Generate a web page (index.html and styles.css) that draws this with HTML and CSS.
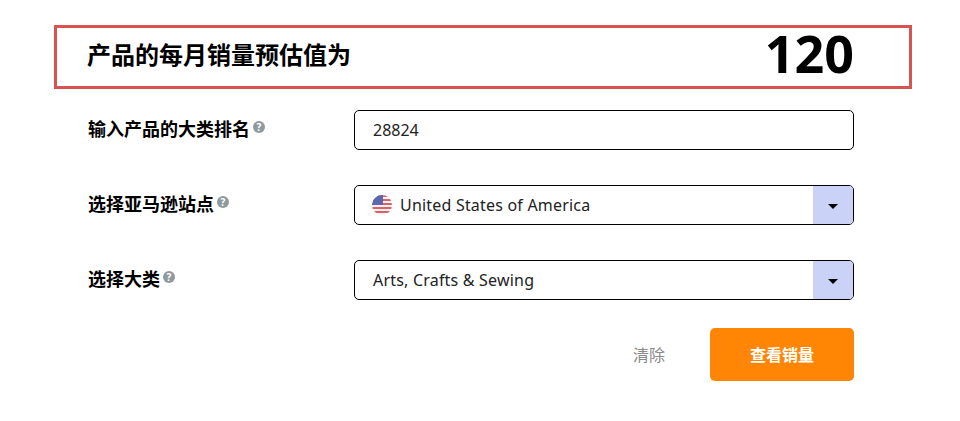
FILE: index.html
```html
<!DOCTYPE html>
<html lang="zh-CN">

<head>
    <meta charset="UTF-8">
    <meta name="viewport" content="width=device-width, initial-scale=1.0">
    <title>亚马逊销量预估</title>
    <link rel="stylesheet" href="styles.css">
</head>

<body>

    <div class="calculator">
        <div class="result-box">
            <span class="result-label">产品的每月销量预估值为</span>
            <span class="result-value">120</span>
        </div>

        <div class="form">
            <div class="form-row">
                <label class="form-label" for="inputRank">输入产品的大类排名<span class="help-icon">?</span></label>
                <input class="form-input" type="text" id="inputRank" value="28824">
            </div>

            <div class="form-row">
                <div class="form-label">选择亚马逊站点<span class="help-icon">?</span></div>
                <div class="select-box">
                    <div class="select-value">
                        <svg class="flag" viewBox="0 0 20 20" aria-hidden="true">
                            <defs>
                                <clipPath id="flagCircle">
                                    <circle cx="10" cy="10" r="10"></circle>
                                </clipPath>
                            </defs>
                            <g clip-path="url(#flagCircle)">
                                <rect width="20" height="20" fill="#fbeeee"></rect>
                                <rect y="0" width="20" height="2" fill="#d9636b"></rect>
                                <rect y="4" width="20" height="2" fill="#d9636b"></rect>
                                <rect y="8" width="20" height="2" fill="#d9636b"></rect>
                                <rect y="12" width="20" height="2" fill="#d9636b"></rect>
                                <rect y="16" width="20" height="2" fill="#d9636b"></rect>
                                <rect width="11" height="10" fill="#5a68ad"></rect>
                            </g>
                        </svg>
                        United States of America
                    </div>
                    <div class="select-arrow"></div>
                </div>
            </div>

            <div class="form-row">
                <div class="form-label">选择大类<span class="help-icon">?</span></div>
                <div class="select-box">
                    <div class="select-value">Arts, Crafts &amp; Sewing</div>
                    <div class="select-arrow"></div>
                </div>
            </div>
        </div>

        <div class="actions">
            <button class="clear-button">清除</button>
            <button class="submit-button">查看销量</button>
        </div>
    </div>

</body>

</html>
```

FILE: styles.css
```css
body {
    margin: 0;
    background-color: #fff;
    color: #000;
    font-family: "Noto Sans", "Noto Sans CJK SC", sans-serif;
}

.calculator {
    width: 858px;
    margin-left: 54px;
    padding-top: 25px;
}

.result-box {
    display: flex;
    justify-content: space-between;
    align-items: center;
    box-sizing: border-box;
    height: 64px;
    padding: 0 55px 8px 30px;
    border: 3px solid #d95353;
}

.result-label {
    font-size: 24px;
    font-weight: bold;
}

.result-value {
    font-size: 52px;
    font-weight: bold;
    line-height: 1;
}

.form {
    display: flex;
    flex-direction: column;
    gap: 35px;
    margin-top: 21px;
    padding-left: 34px;
}

.form-row {
    display: grid;
    grid-template-columns: 266px 500px;
    height: 40px;
}

.form-label {
    display: flex;
    align-items: center;
    height: 38px;
    font-size: 18px;
    font-weight: bold;
    line-height: 1;
}

.help-icon {
    display: inline-block;
    width: 12px;
    height: 12px;
    margin: -4px 0 0 3px;
    border-radius: 50%;
    background-color: #8f9a9e;
    color: #fff;
    font-size: 10px;
    line-height: 12px;
    text-align: center;
}

.form-input,
.select-box {
    box-sizing: border-box;
    width: 500px;
    height: 40px;
    border: 1px solid #000;
    border-radius: 5px;
    background-color: #fff;
    font-family: inherit;
    font-size: 16px;
    color: #222;
}

.form-input {
    padding: 0 18px;
    outline: none;
}

.select-box {
    display: flex;
    justify-content: space-between;
    overflow: hidden;
    letter-spacing: 0.2px;
}

.select-value {
    display: flex;
    align-items: center;
    padding-left: 18px;
}

.flag {
    width: 20px;
    height: 20px;
    margin: 0 8px 0 -1px;
}

.select-arrow {
    display: flex;
    align-items: center;
    justify-content: center;
    width: 40px;
    background-color: #cad2f7;
}

.select-arrow::after {
    content: "";
    margin-top: 3px;
    border-top: 5px solid #000;
    border-left: 5px solid transparent;
    border-right: 5px solid transparent;
}

.actions {
    display: flex;
    justify-content: flex-end;
    align-items: center;
    gap: 45px;
    margin-top: 28px;
    padding-right: 58px;
}

.clear-button {
    padding: 0 0 2px;
    border: none;
    background: none;
    color: #8a8a8a;
    font-family: inherit;
    font-size: 16px;
}

.submit-button {
    width: 144px;
    height: 53px;
    padding: 0 0 2px;
    border: none;
    border-radius: 5px;
    background-color: #ff8605;
    color: #fff;
    font-family: inherit;
    font-size: 16px;
    font-weight: bold;
}
```
